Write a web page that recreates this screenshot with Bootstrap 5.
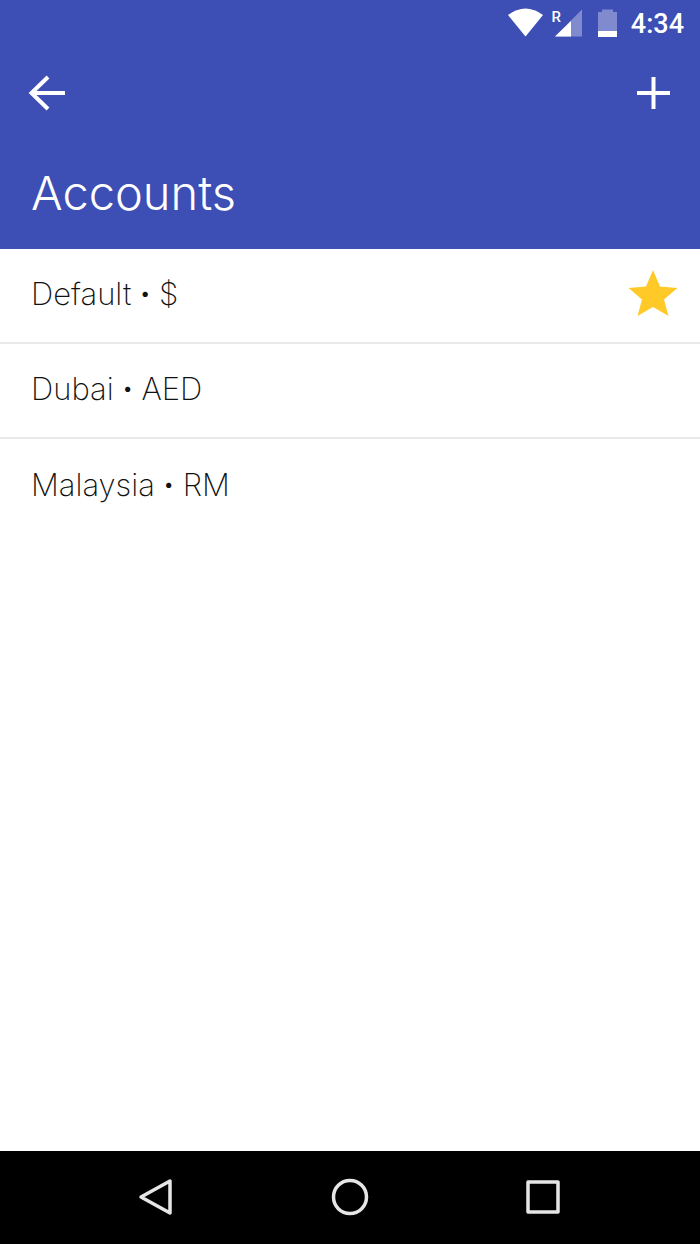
<!DOCTYPE html>
<html lang="en">
<head>
    <meta charset="UTF-8">
    <title>Accounts</title>
    <link href="https://cdn.jsdelivr.net/npm/bootstrap@5.3.0/dist/css/bootstrap.min.css" rel="stylesheet">
    <style>
        html, body { height: 100%; }
        body { font-family: Inter, Roboto, "Liberation Sans", sans-serif; background: #fff; }
        .screen { height: 1244px; }
        .app-head { background: #3d4eb5; height: 249px; color: #fff; }
        .status-row { height: 48px; padding-right: 16px; gap: 14px; }
        .clock { font-family: Roboto, sans-serif; font-size: 27px; font-weight: 500; line-height: 1; }
        .tool-row { height: 90px; padding: 0 30px 0 28px; }
        .head-title { font-size: 47px; font-weight: 270; line-height: 56px; padding: 27px 0 0 31px; margin: 0; }
        .acct-list .list-group-item { height: 95px; padding: 0 22px 2px 31px; border-color: #e9e9e9; border-width: 0 0 2px; font-size: 31px; font-weight: 250; color: #111; }
        .acct-list .list-group-item:last-child { border-bottom: 0; }
        .dot-sep { font-weight: 700; }
        .star-icon { margin-bottom: 4px; }
        .soft-keys { height: 93px; background: #000; padding: 0 140px 2px 138px; }
    </style>
</head>
<body>

<div class="screen d-flex flex-column">

    <!-- Blue header -->
    <div class="app-head">
        <div class="status-row d-flex justify-content-end align-items-center">
            <svg width="109" height="48" viewBox="0 0 109 48">
                <path d="M17.500 36.500 L0 15 Q17.500 2 35 15 Z" fill="#fff"/>
                <text x="43.500" y="22" fill="#fff" font-family="Roboto, sans-serif" font-size="15" font-weight="500">R</text>
                <path d="M47 36.500 L74 9.500 V36.500 Z" fill="#fff" opacity=".35"/>
                <path d="M47 36.500 L63 21 V36.500 Z" fill="#fff"/>
                <path d="M90 12 H94 V9.500 H105 V12 H109 V37 H90 Z" fill="#fff" opacity=".35"/>
                <path d="M90 31 H109 V37 H90 Z" fill="#fff"/>
            </svg>
            <span class="clock">4:34</span>
        </div>
        <div class="tool-row d-flex justify-content-between align-items-center">
            <svg width="37" height="38" viewBox="0 0 37 38" fill="none" stroke="#fff" stroke-width="4">
                <path d="M37 19 H4"/>
                <path d="M20 3 L3.500 19 L20 35"/>
            </svg>
            <svg width="33" height="34" viewBox="0 0 33 34" fill="none" stroke="#fff" stroke-width="4">
                <path d="M16.500 1 V33"/>
                <path d="M0 17 H33"/>
            </svg>
        </div>
        <h1 class="head-title">Accounts</h1>
    </div>

    <!-- Account rows -->
    <ul class="list-group list-group-flush acct-list flex-grow-1">
        <li class="list-group-item d-flex justify-content-between align-items-center">
            <span>Default <span class="dot-sep">·</span> $</span>
            <svg class="star-icon" width="50" height="48" viewBox="0 0 50 48">
                <path d="M25 1 L32 17.500 L49.500 19 L36 30.500 L40.500 47 L25 38 L9.500 47 L14 30.500 L.5 19 L18 17.500 Z" fill="#ffca28"/>
            </svg>
        </li>
        <li class="list-group-item d-flex align-items-center"><span>Dubai <span class="dot-sep">·</span> AED</span></li>
        <li class="list-group-item d-flex align-items-center"><span>Malaysia <span class="dot-sep">·</span> RM</span></li>
    </ul>

    <!-- Android soft keys -->
    <div class="soft-keys d-flex justify-content-between align-items-center">
        <svg width="36" height="38" viewBox="0 0 36 38" fill="none" stroke="#e6e6e6" stroke-width="3.500" stroke-linejoin="round">
            <path d="M32 3 V35 L3 19 Z"/>
        </svg>
        <svg width="38" height="38" viewBox="0 0 38 38" fill="none" stroke="#e6e6e6" stroke-width="3.500">
            <circle cx="19" cy="19" r="16.500"/>
        </svg>
        <svg width="34" height="34" viewBox="0 0 34 34" fill="none" stroke="#e6e6e6" stroke-width="3.500" stroke-linejoin="round">
            <rect x="2" y="2" width="30" height="30"/>
        </svg>
    </div>

</div>

<script src="https://cdn.jsdelivr.net/npm/bootstrap@5.3.0/dist/js/bootstrap.bundle.min.js"></script>
</body>
</html>
